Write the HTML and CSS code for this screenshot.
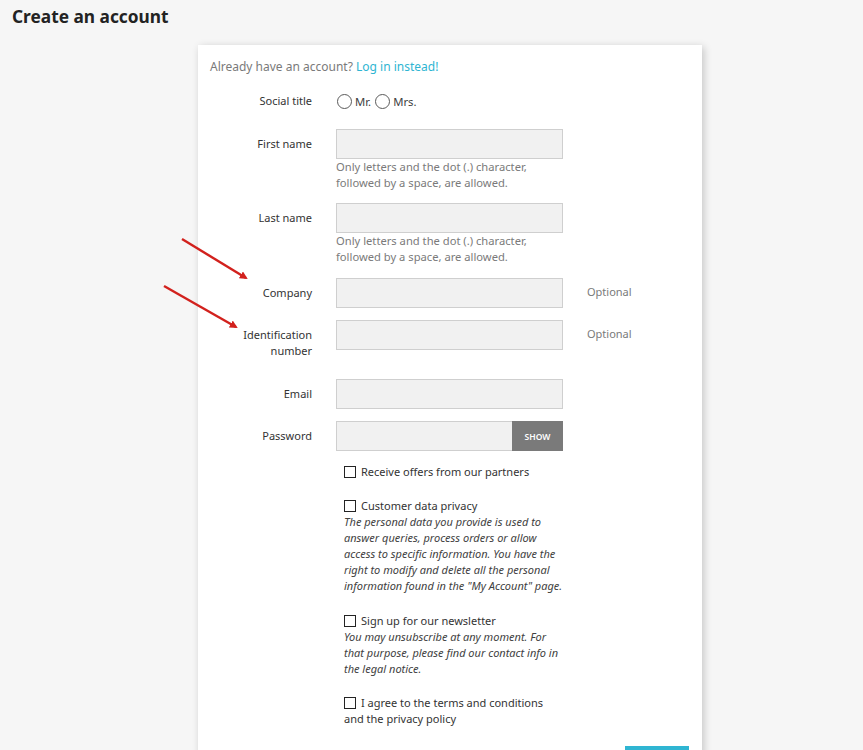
FILE: index.html
```html
<!DOCTYPE html>
<html lang="en">
<head>
<meta charset="utf-8">
<title>Create an account</title>
<link rel="stylesheet" href="styles.css">
</head>
<body>
<h1 class="page-title">Create an account</h1>
<main class="page-content">
  <section class="card">
    <p class="login-hint">Already have an account? <a href="#" class="link">Log in instead!</a></p>
    <form class="register-form">
      <div class="form-group">
        <span class="form-label">Social title</span>
        <div class="radio-row">
          <label class="radio"><span class="radio-dot"></span>Mr.</label>
          <label class="radio"><span class="radio-dot"></span>Mrs.</label>
        </div>
      </div>
      <div class="form-group">
        <label class="form-label">First name</label>
        <div class="field">
          <span class="input"></span>
          <p class="help">Only letters and the dot (.) character,<br>followed by a space, are allowed.</p>
        </div>
      </div>
      <div class="form-group">
        <label class="form-label">Last name</label>
        <div class="field">
          <span class="input"></span>
          <p class="help">Only letters and the dot (.) character,<br>followed by a space, are allowed.</p>
        </div>
      </div>
      <div class="form-group">
        <label class="form-label">Company</label>
        <div class="field"><span class="input"></span></div>
        <span class="optional">Optional</span>
      </div>
      <div class="form-group">
        <label class="form-label">Identification<br>number</label>
        <div class="field"><span class="input"></span></div>
        <span class="optional">Optional</span>
      </div>
      <div class="form-group">
        <label class="form-label">Email</label>
        <div class="field"><span class="input"></span></div>
      </div>
      <div class="form-group">
        <label class="form-label">Password</label>
        <div class="field input-group">
          <span class="input input-grow"></span>
          <button type="button" class="btn-show">SHOW</button>
        </div>
      </div>
      <div class="check-group">
        <label class="check"><span class="box"></span>Receive offers from our partners</label>
      </div>
      <div class="check-group">
        <label class="check"><span class="box"></span>Customer data privacy</label>
        <p class="note">The personal data you provide is used to answer queries, process orders or allow access to specific information. You have the right to modify and delete all the personal information found in the "My Account" page.</p>
      </div>
      <div class="check-group">
        <label class="check"><span class="box"></span>Sign up for our newsletter</label>
        <p class="note">You may unsubscribe at any moment. For that purpose, please find our contact info in the legal notice.</p>
      </div>
      <div class="check-group">
        <label class="check"><span class="box"></span>I agree to the terms and conditions and the privacy policy</label>
      </div>
      <div class="form-footer">
        <button type="button" class="btn-save">SAVE</button>
      </div>
    </form>
  </section>
</main>
<svg class="arrows" width="863" height="750" viewBox="0 0 863 750" aria-hidden="true">
  <defs>
    <marker id="head" markerWidth="8" markerHeight="8" refX="6" refY="4" orient="auto" markerUnits="userSpaceOnUse">
      <path d="M0 0 L8 4 L0 8 Z" fill="#d2211d"/>
    </marker>
  </defs>
  <line x1="182" y1="239" x2="246" y2="278" stroke="#d2211d" stroke-width="2.4" marker-end="url(#head)"/>
  <line x1="164" y1="286" x2="236" y2="327" stroke="#d2211d" stroke-width="2.4" marker-end="url(#head)"/>
</svg>
</body>
</html>
```
FILE: styles.css
```css
* { box-sizing: border-box; }
html, body { margin: 0; padding: 0; }
body {
  background: #f6f6f6;
  font-family: "Noto Sans", "Open Sans", sans-serif;
  color: #232323;
  position: relative;
  min-height: 750px;
}
.page-title {
  margin: 0;
  padding: 5px 12px 0;
  font-size: 17.3px;
  line-height: 24px;
  font-weight: 700;
  color: #232323;
}
.page-content {
  padding: 16px 0 0 198px;
}
.card {
  width: 504px;
  background: #fff;
  box-shadow: 2px 2px 8px 0 rgba(0,0,0,.2);
  padding: 13px 13px 20px 12px;
}
.login-hint {
  margin: 0 0 10px;
  font-size: 12px;
  line-height: 18px;
  color: #7a7a7a;
}
.link { color: #2fb5d2; text-decoration: none; }
.register-form { margin: 0; }
.form-group {
  display: grid;
  grid-template-columns: 102px 227px auto;
  column-gap: 24px;
  margin-bottom: 12.5px;
}
.form-label {
  text-align: right;
  font-size: 11px;
  line-height: 16px;
  padding: 7px 0;
  color: #333;
}
.radio-row {
  display: flex;
  align-items: center;
  gap: 4px;
  height: 30px;
  padding-left: 1px;
}
.radio {
  display: flex;
  align-items: center;
  gap: 3px;
  font-size: 11.3px;
  color: #414141;
}
.radio-dot {
  width: 15px;
  height: 15px;
  border: 1.5px solid #5a5a5a;
  border-radius: 50%;
}
.input {
  display: block;
  height: 30px;
  background: #f1f1f1;
  border: 1px solid #cfcfcf;
}
.input-group { display: flex; }
.input-grow { flex: 1; border-right: 0; }
.btn-show {
  width: 51px;
  height: 30px;
  border: 0;
  background: #7a7a7a;
  color: #fff;
  font-family: inherit;
  font-size: 8.5px;
  font-weight: 600;
  padding: 0;
}
.help {
  margin: 0;
  font-size: 11.2px;
  line-height: 16px;
  color: #7a7a7a;
}
.optional {
  font-size: 11px;
  line-height: 16px;
  padding-top: 6px;
  color: #7a7a7a;
}
.check-group {
  margin: 0 0 18.5px 134px;
  width: 219px;
}
.check {
  display: block;
  font-size: 11px;
  line-height: 16px;
  color: #333;
}
.box {
  display: inline-block;
  width: 12px;
  height: 12px;
  border: 1.5px solid #232323;
  vertical-align: -2px;
  margin-right: 5px;
}
.note {
  margin: 0;
  font-size: 11px;
  line-height: 16px;
  font-style: italic;
  color: #414141;
}
.form-footer {
  text-align: right;
}
.btn-save {
  background: #2fb5d2;
  color: #fff;
  border: 0;
  width: 64px;
  height: 38px;
  font-family: inherit;
  font-size: 12px;
  font-weight: 600;
}
.arrows {
  position: absolute;
  left: 0;
  top: 0;
  pointer-events: none;
}
```
